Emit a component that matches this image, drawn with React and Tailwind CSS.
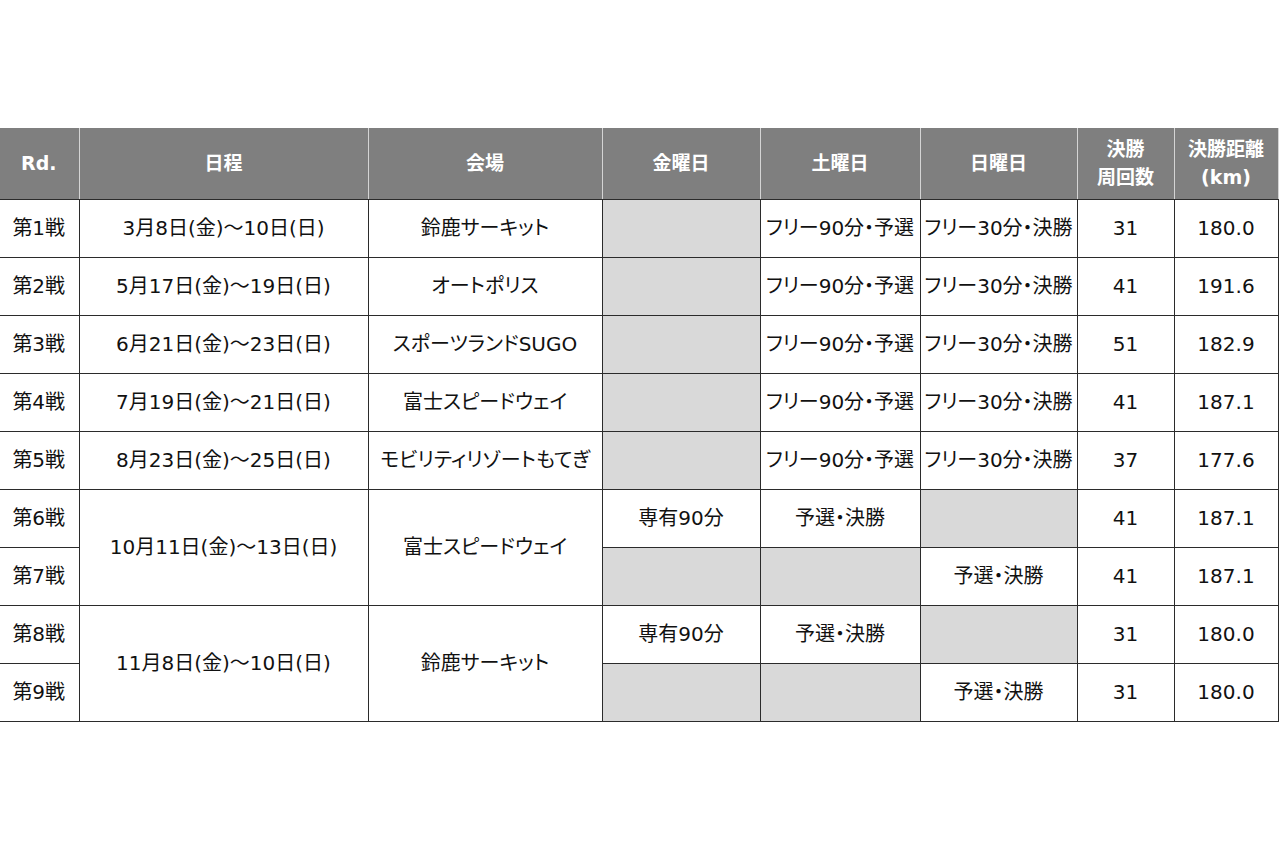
const ROWS = [
  { rd: '第1戦', date: '3月8日(金)〜10日(日)', venue: '鈴鹿サーキット', fri: null, sat: 'フリー90分・予選', sun: 'フリー30分・決勝', laps: '31', km: '180.0' },
  { rd: '第2戦', date: '5月17日(金)〜19日(日)', venue: 'オートポリス', fri: null, sat: 'フリー90分・予選', sun: 'フリー30分・決勝', laps: '41', km: '191.6' },
  { rd: '第3戦', date: '6月21日(金)〜23日(日)', venue: 'スポーツランドSUGO', fri: null, sat: 'フリー90分・予選', sun: 'フリー30分・決勝', laps: '51', km: '182.9' },
  { rd: '第4戦', date: '7月19日(金)〜21日(日)', venue: '富士スピードウェイ', fri: null, sat: 'フリー90分・予選', sun: 'フリー30分・決勝', laps: '41', km: '187.1' },
  { rd: '第5戦', date: '8月23日(金)〜25日(日)', venue: 'モビリティリゾートもてぎ', fri: null, sat: 'フリー90分・予選', sun: 'フリー30分・決勝', laps: '37', km: '177.6' },
]

const PAIRS = [
  {
    date: '10月11日(金)〜13日(日)',
    venue: '富士スピードウェイ',
    rows: [
      { rd: '第6戦', fri: '専有90分', sat: '予選・決勝', sun: null, laps: '41', km: '187.1' },
      { rd: '第7戦', fri: null, sat: null, sun: '予選・決勝', laps: '41', km: '187.1' },
    ],
  },
  {
    date: '11月8日(金)〜10日(日)',
    venue: '鈴鹿サーキット',
    rows: [
      { rd: '第8戦', fri: '専有90分', sat: '予選・決勝', sun: null, laps: '31', km: '180.0' },
      { rd: '第9戦', fri: null, sat: null, sun: '予選・決勝', laps: '31', km: '180.0' },
    ],
  },
]

const td = 'border border-[#2b2b2b] text-center align-middle whitespace-nowrap p-0'
const th = 'border border-[#d4d4d4] border-b-[#2b2b2b] bg-[#7f7f7f] text-center align-middle font-bold text-white p-0 leading-[28px]'

function Slot({ value }) {
  if (!value) return <td className={`${td} bg-[#d9d9d9]`} />
  return <td className={td}>{value}</td>
}

export default function App() {
  return (
    <div
      className="min-h-[854px] w-[1280px] bg-white pt-[128px] text-[#111] overflow-hidden [font-feature-settings:'palt']"
      style={{ fontFamily: '"DejaVu Sans", "Noto Sans CJK JP", sans-serif' }}
    >
      <table className="table-fixed border-collapse w-[1278px] text-[20px] -ml-px">
        <colgroup>
          <col className="w-[80px]" />
          <col className="w-[289px]" />
          <col className="w-[234px]" />
          <col className="w-[158px]" />
          <col className="w-[160px]" />
          <col className="w-[157px]" />
          <col className="w-[97px]" />
          <col className="w-[104px]" />
        </colgroup>
        <thead>
          <tr className="h-[71px] text-[19px]">
            <th className={`${th} border-t-0 border-l-0`}>Rd.</th>
            <th className={`${th} border-t-0`}>日程</th>
            <th className={`${th} border-t-0`}>会場</th>
            <th className={`${th} border-t-0`}>金曜日</th>
            <th className={`${th} border-t-0`}>土曜日</th>
            <th className={`${th} border-t-0`}>日曜日</th>
            <th className={`${th} border-t-0`}>決勝<br />周回数</th>
            <th className={`${th} border-t-0`}>決勝距離<br />(km)</th>
          </tr>
        </thead>
        <tbody>
          {ROWS.map((r) => (
            <tr key={r.rd} className="h-[58px]">
              <td className={`${td} border-l-0`}>{r.rd}</td>
              <td className={td}>{r.date}</td>
              <td className={td}>{r.venue}</td>
              <Slot value={r.fri} />
              <Slot value={r.sat} />
              <Slot value={r.sun} />
              <td className={td}>{r.laps}</td>
              <td className={td}>{r.km}</td>
            </tr>
          ))}
          {PAIRS.map((p) =>
            p.rows.map((r, i) => (
              <tr key={r.rd} className="h-[58px]">
                <td className={`${td} border-l-0`}>{r.rd}</td>
                {i === 0 && (
                  <>
                    <td rowSpan={2} className={td}>{p.date}</td>
                    <td rowSpan={2} className={td}>{p.venue}</td>
                  </>
                )}
                <Slot value={r.fri} />
                <Slot value={r.sat} />
                <Slot value={r.sun} />
                <td className={td}>{r.laps}</td>
                <td className={td}>{r.km}</td>
              </tr>
            ))
          )}
        </tbody>
      </table>
    </div>
  )
}
